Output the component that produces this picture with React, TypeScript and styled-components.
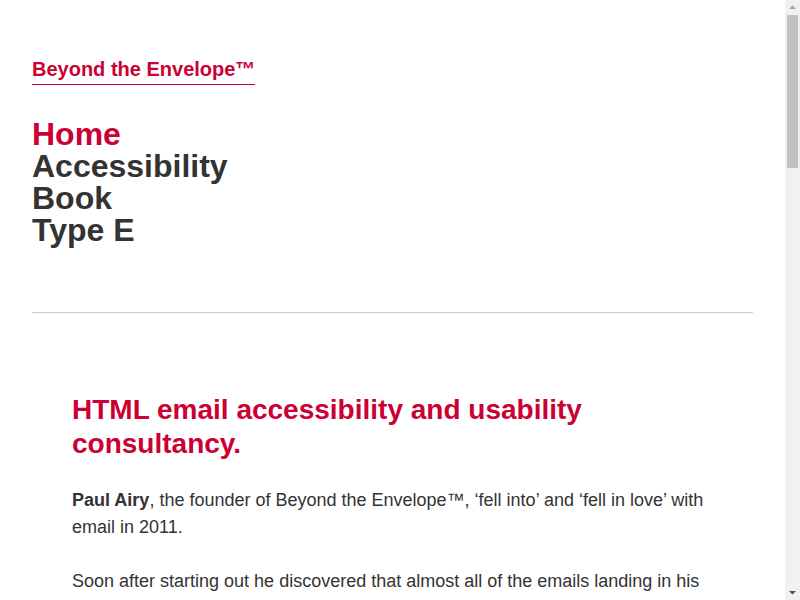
import React from "react";
import styled, { createGlobalStyle } from "styled-components";

const GlobalStyle = createGlobalStyle`
  html, body {
    margin: 0;
    padding: 0;
    background: #ffffff;
  }
  html {
    scrollbar-width: none;
  }
  html::-webkit-scrollbar {
    display: none;
  }
  body {
    font-family: "Liberation Sans", Arial, sans-serif;
    color: #333333;
  }
`;

const RED = "#cc0033";

const Page = styled.div`
  padding: 0 47px 120px 32px;
`;

const Header = styled.header`
  padding-top: 58px;
  padding-bottom: 66px;
  border-bottom: 1px solid #cccccc;
`;

const Logo = styled.a`
  display: inline-block;
  font-size: 20px;
  font-weight: 700;
  line-height: 23px;
  color: ${RED};
  text-decoration: none;
  padding-bottom: 3px;
  border-bottom: 1px solid ${RED};
`;

const Nav = styled.nav`
  margin-top: 33px;
`;

const NavList = styled.ul`
  list-style: none;
  margin: 0;
  padding: 0;
`;

const NavItem = styled.li`
  margin: 0;
`;

const NavLink = styled.a<{ $current?: boolean }>`
  font-size: 32px;
  line-height: 32px;
  font-weight: 700;
  text-decoration: none;
  color: ${(p) => (p.$current ? RED : "#333333")};
`;

const Article = styled.main`
  padding: 80px 40px 0;
`;

const Heading = styled.h1`
  margin: 0 0 27px;
  font-size: 28px;
  line-height: 33.6px;
  font-weight: 700;
  color: ${RED};
`;

const Para = styled.p`
  margin: 0 0 27px;
  font-size: 18px;
  line-height: 27px;
  color: #333333;
`;

const SubHeading = styled.h2`
  margin: 54px 0 27px;
  font-size: 24px;
  line-height: 30px;
  font-weight: 700;
  color: ${RED};
`;

/* imitation of the browser's classic scrollbar, laid over the right edge */
const ScrollTrack = styled.div`
  position: fixed;
  top: 0;
  right: 0;
  bottom: 0;
  width: 15px;
  background: #f1f1f1;
  display: flex;
  flex-direction: column;
`;

const ScrollButton = styled.div`
  height: 15px;
  flex: none;
  display: flex;
  align-items: center;
  justify-content: center;
`;

const ScrollThumb = styled.div`
  height: 153px;
  margin: 0 2px;
  background: #c1c1c1;
  flex: none;
`;

const ScrollSpace = styled.div`
  flex: 1;
`;

const Arrow = ({ up }: { up?: boolean }) => (
  <svg width="15" height="15" viewBox="0 0 15 15">
    {up ? (
      <polygon points="4,9 11,9 7.5,5.5" fill="#a3a3a3" />
    ) : (
      <polygon points="4,6 11,6 7.5,9.5" fill="#505050" />
    )}
  </svg>
);

const navItems = ["Home", "Accessibility", "Book", "Type E"];

export default function App() {
  return (
    <>
      <GlobalStyle />
      <Page>
        <Header>
          <Logo href="#">Beyond the Envelope™</Logo>
          <Nav>
            <NavList>
              {navItems.map((item, i) => (
                <NavItem key={item}>
                  <NavLink href="#" $current={i === 0}>
                    {item}
                  </NavLink>
                </NavItem>
              ))}
            </NavList>
          </Nav>
        </Header>
        <Article>
          <Heading>HTML email accessibility and usability consultancy.</Heading>
          <Para>
            <strong>Paul Airy</strong>, the founder of Beyond the Envelope™, ‘fell into’ and ‘fell in love’ with
            email in 2011.
          </Para>
          <Para>
            Soon after starting out he discovered that almost all of the emails landing in his inbox were
            inaccessible to many people, including people with disabilities, and he set out to change that.
          </Para>
          <Para>
            Since then he has helped teams around the world design and build emails that work for everyone,
            regardless of how they read them, which device they use or which assistive technology they rely on.
          </Para>
          <SubHeading>What we do</SubHeading>
          <Para>
            We audit email templates and campaigns, advise on design systems and coding practices, and train
            designers, developers and marketers in accessible email.
          </Para>
          <Para>
            We also write and speak about email accessibility, sharing what we learn with the wider email
            community through articles, talks and workshops.
          </Para>
          <SubHeading>Why it matters</SubHeading>
          <Para>
            Around one in five people live with a disability. Accessible emails reach more people, are easier
            to use and tend to perform better for every reader.
          </Para>
          <Para>
            Good accessibility is good usability: clear structure, readable text, meaningful links and sensible
            colour contrast help everyone get the message.
          </Para>
          <SubHeading>Get in touch</SubHeading>
          <Para>
            If you would like to make your emails more accessible, or simply want to talk about how to get
            started, we would love to hear from you.
          </Para>
          <Para>
            Email us at hello@beyondtheenvelope.com and we will get back to you as soon as we can.
          </Para>
          <Para>
            Beyond the Envelope™ is based in the United Kingdom and works with clients everywhere.
          </Para>
          <Para>
            Thank you for visiting, and for caring about the people who read your emails.
          </Para>
        </Article>
      </Page>
      <ScrollTrack aria-hidden="true">
        <ScrollButton>
          <Arrow up />
        </ScrollButton>
        <ScrollThumb />
        <ScrollSpace />
        <ScrollButton>
          <Arrow />
        </ScrollButton>
      </ScrollTrack>
    </>
  );
}
